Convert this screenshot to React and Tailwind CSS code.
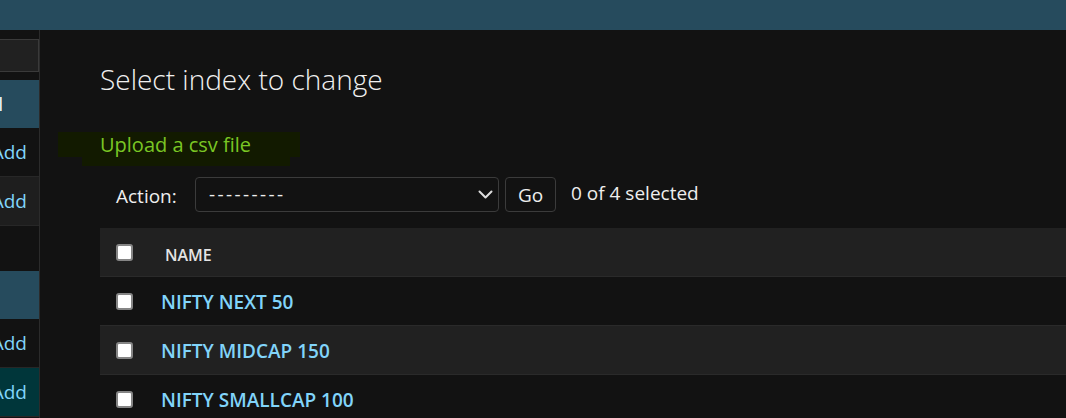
const font = { fontFamily: '"Open Sans", "Noto Sans", sans-serif' };

function Checkbox() {
  return <div className="w-[17px] h-[17px] shrink-0 rounded-[3px] bg-white border-2 border-[#858585]" />;
}

function SidebarRow({ selected, alt }) {
  const bg = selected ? 'bg-[#00363a]' : alt ? 'bg-[#1e1e1e]' : 'bg-[#121212]';
  return (
    <div className={`h-[49px] flex items-center border-b border-[#272727] ${bg}`}>
      <div className="w-[268px] text-right text-[19px] text-[#81d4fa]">Add</div>
    </div>
  );
}

function Caption({ text, w }) {
  return (
    <div className="h-[48px] flex items-center bg-[#264b5d]">
      <div className={`${w} text-right text-[18px] text-white whitespace-nowrap overflow-hidden`}>{text}</div>
    </div>
  );
}

const rows = ['NIFTY NEXT 50', 'NIFTY MIDCAP 150', 'NIFTY SMALLCAP 100'];

export default function App() {
  return (
    <div className="w-[1066px] h-[418px] overflow-hidden bg-[#121212] text-[#eeeeee]" style={font}>
      <div className="h-[30px] bg-[#264b5d]" />
      <div className="flex h-[388px]">
        {/* sidebar, scrolled so only its right edge shows */}
        <div className="w-[40px] shrink-0 border-r border-[#2b2b2b] overflow-hidden">
          <div className="w-[280px] -ml-[241px] pt-[9px]">
            <div className="h-[33px] ml-[10px] bg-[#212121] border border-[#3a3a3a]" />
            <div className="mt-[8px]">
              <Caption text="Capital" w="w-[244px]" />
              <SidebarRow />
              <SidebarRow alt />
            </div>
            <div className="mt-[45px]">
              <Caption text="Index" w="w-[230px]" />
              <SidebarRow />
              <SidebarRow selected />
            </div>
          </div>
        </div>

        <div className="flex-1 pl-[60px]">
          <h1 className="mt-[31px] text-[28px] leading-[37px] font-light text-[#f0f0f0]">Select index to change</h1>

          <div className="mt-[34px] -ml-[42px]">
            <div className="w-[242px] h-[25px] pl-[42px] bg-[#121a00] text-[20px] leading-[25px] text-[#7ac624]">Upload a csv file</div>
            <div className="w-[208px] h-[9px] ml-[24px] bg-[#121a00]" />
          </div>

          <div className="mt-[11px] h-[35px] flex items-center pl-[16px] text-[19px]">
            <span className="w-[79px] pt-[3px]">Action:</span>
            <div className="w-[304px] h-[35px] flex items-center justify-between pl-[13px] pr-[5px] rounded-[4px] border border-[#3b3b3b]">
              <span className="tracking-[2.4px] leading-none">---------</span>
              <svg width="15" height="9" viewBox="0 0 15 9" fill="none" stroke="#dddddd" strokeWidth="2" strokeLinecap="round" strokeLinejoin="round">
                <polyline points="1.5,1.5 7.5,7.5 13.5,1.5" />
              </svg>
            </div>
            <div className="ml-[6px] w-[51px] h-[35px] flex items-center justify-center pt-[2px] rounded-[4px] border border-[#3b3b3b]">Go</div>
            <span className="ml-[15px] -mt-[2px]">0 of 4 selected</span>
          </div>

          <div className="mt-[16px]">
            <div className="h-[49px] flex items-center pl-[16px] bg-[#212121] border-b border-[#2a2a2a]">
              <Checkbox />
              <span className="ml-[32px] mt-[6px] text-[16px] font-semibold text-[#e4e4e4]">NAME</span>
            </div>
            {rows.map((r, i) => (
              <div key={r} className={`h-[49px] flex items-center pl-[16px] border-b border-[#2a2a2a] ${i % 2 ? 'bg-[#212121]' : 'bg-[#121212]'}`}>
                <Checkbox />
                <span className="ml-[28px] mt-[3px] text-[19px] font-semibold text-[#81d4fa]">{r}</span>
              </div>
            ))}
          </div>
        </div>
      </div>
    </div>
  );
}
